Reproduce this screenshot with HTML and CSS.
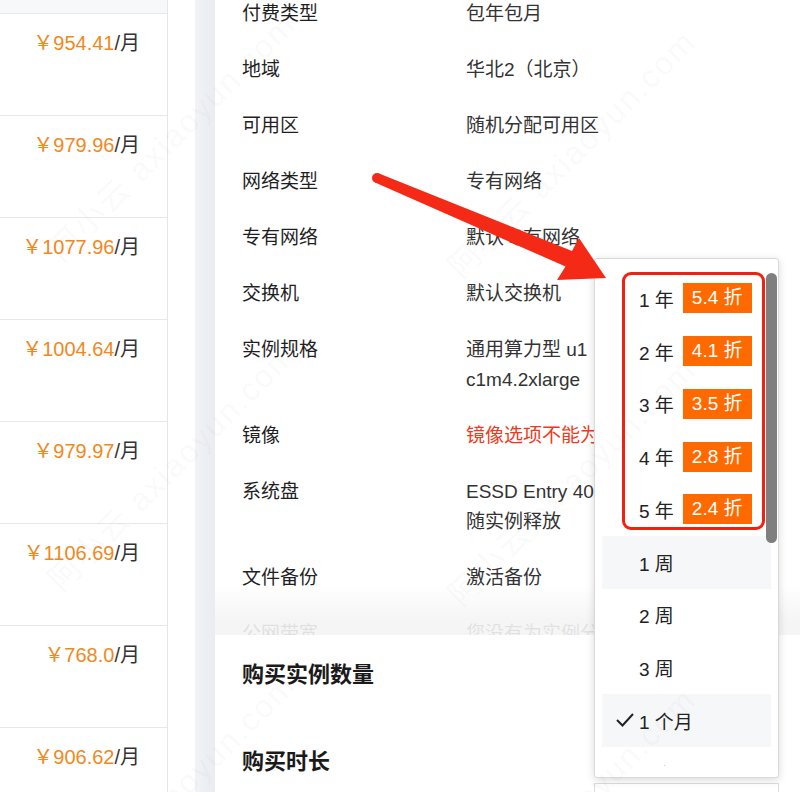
FILE: index.html
```html
<!DOCTYPE html>
<html>
<head>
  <meta charset="utf-8">
  <title>购买实例</title>
  <link rel="stylesheet" href="styles.css">
</head>
<body>
<div class="page">

  <aside class="price-col">
    <div class="price-head"></div>
    <div class="price-row"><span class="amount">￥954.41</span>/月</div>
    <div class="price-row"><span class="amount">￥979.96</span>/月</div>
    <div class="price-row"><span class="amount">￥1077.96</span>/月</div>
    <div class="price-row"><span class="amount">￥1004.64</span>/月</div>
    <div class="price-row"><span class="amount">￥979.97</span>/月</div>
    <div class="price-row"><span class="amount">￥1106.69</span>/月</div>
    <div class="price-row"><span class="amount">￥768.0</span>/月</div>
    <div class="price-row"><span class="amount">￥906.62</span>/月</div>
  </aside>

  <div class="gap"></div>
  <div class="shade"></div>

  <main class="panel">
    <div class="spec-list">
      <div class="spec-inner">
        <div class="spec-row"><div class="spec-label">付费类型</div><div class="spec-value">包年包月</div></div>
        <div class="spec-row"><div class="spec-label">地域</div><div class="spec-value">华北2（北京）</div></div>
        <div class="spec-row"><div class="spec-label">可用区</div><div class="spec-value">随机分配可用区</div></div>
        <div class="spec-row"><div class="spec-label">网络类型</div><div class="spec-value">专有网络</div></div>
        <div class="spec-row"><div class="spec-label">专有网络</div><div class="spec-value">默认专有网络</div></div>
        <div class="spec-row"><div class="spec-label">交换机</div><div class="spec-value">默认交换机</div></div>
        <div class="spec-row"><div class="spec-label">实例规格</div><div class="spec-value">通用算力型 u1（ecs.u1-<br>c1m4.2xlarge</div></div>
        <div class="spec-row"><div class="spec-label">镜像</div><div class="spec-value warn">镜像选项不能为空</div></div>
        <div class="spec-row"><div class="spec-label">系统盘</div><div class="spec-value">ESSD Entry 40 GiB<br>随实例释放</div></div>
        <div class="spec-row"><div class="spec-label">文件备份</div><div class="spec-value">激活备份</div></div>
        <div class="spec-row"><div class="spec-label">公网带宽</div><div class="spec-value">您没有为实例分配公网IP</div></div>
      </div>
    </div>

    <section class="buy">
      <h3 class="buy-title">购买实例数量</h3>
      <h3 class="buy-title second">购买时长</h3>
      <div class="select-box"></div>
    </section>
  </main>

  <div class="dropdown">
    <ul class="options">
      <li class="option"><span class="tick"></span>1 年<span class="off">5.4 折</span></li>
      <li class="option"><span class="tick"></span>2 年<span class="off">4.1 折</span></li>
      <li class="option"><span class="tick"></span>3 年<span class="off">3.5 折</span></li>
      <li class="option"><span class="tick"></span>4 年<span class="off">2.8 折</span></li>
      <li class="option"><span class="tick"></span>5 年<span class="off">2.4 折</span></li>
      <li class="option hover"><span class="tick"></span>1 周</li>
      <li class="option"><span class="tick"></span>2 周</li>
      <li class="option"><span class="tick"></span>3 周</li>
      <li class="option selected"><span class="tick"><svg width="20" height="16" viewBox="0 0 20 16"><polyline points="2,8 7.5,13.5 18,2" fill="none" stroke="#222" stroke-width="2"/></svg></span>1 个月</li>
      <li class="option"><span class="tick"></span>2 个月</li>
    </ul>
    <div class="scroll-thumb"></div>
    <div class="mark-box"></div>
  </div>

  <svg class="arrow" width="800" height="792" viewBox="0 0 800 792">
    <polygon fill="#f42a17" points="379,173.4 572,251 579,238 606,278 557,280 565.5,266.5 375,182.6"/>
    <circle cx="377" cy="178" r="5" fill="#f42a17"/>
  </svg>

  <div class="wm wm1">阿小云 axiaoyun.com</div>
  <div class="wm wm2">阿小云 axiaoyun.com</div>
  <div class="wm wm3">阿小云 axiaoyun.com</div>
  <div class="wm wm4">阿小云 axiaoyun.com</div>
  <div class="wm wm5">阿小云 axiaoyun.com</div>
  <div class="wm wm6">阿小云 axiaoyun.com</div>

</div>
</body>
</html>
```

FILE: styles.css
```css
html, body {
  margin: 0;
  padding: 0;
  background: #fff;
  font-family: "Liberation Sans", "Noto Sans CJK SC", sans-serif;
  color: #222;
}

.page {
  position: relative;
  display: flex;
  width: 800px;
  height: 792px;
  overflow: hidden;
}

/* left price column */
.price-col {
  width: 167px;
  flex: none;
  border-right: 1px solid #e6e6e6;
}
.price-head {
  height: 13px;
  background: #f7f8fa;
  border-bottom: 1px solid #e8e8e8;
}
.price-row {
  height: 84px;
  padding: 17px 27px 0 0;
  border-bottom: 1px solid #e8e8e8;
  text-align: right;
  font-size: 20px;
  line-height: 24px;
  color: #333;
}
.price-row .amount {
  color: #f0891d;
}

.gap {
  width: 27px;
  flex: none;
}
.shade {
  width: 20px;
  flex: none;
  background: linear-gradient(to right, #f1f3f6, #e9ecf0);
}

/* detail panel */
.panel {
  flex: 1;
  display: flex;
  flex-direction: column;
  min-width: 0;
}
.spec-list {
  position: relative;
  height: 635px;
  overflow: hidden;
  flex: none;
}
.spec-list::after {
  content: "";
  position: absolute;
  left: 0;
  right: 0;
  bottom: 0;
  height: 50px;
  background: linear-gradient(rgba(244,244,244,0), rgba(244,244,244,0.9) 70%);
}
.spec-inner {
  margin-top: -14px;
  padding-left: 27px;
}
.spec-row {
  display: flex;
  padding: 13px 0;
  font-size: 19px;
  line-height: 30px;
}
.spec-label {
  width: 224px;
  flex: none;
  color: #1f1f1f;
}
.spec-value {
  color: #333;
  white-space: nowrap;
}
.spec-value.warn {
  color: #ee3a22;
}

.buy {
  padding: 25px 0 0 27px;
}
.buy-title {
  margin: 0;
  font-size: 22px;
  line-height: 30px;
  font-weight: bold;
  color: #1a1a1a;
}
.buy-title.second {
  margin-top: 57px;
}
.select-box {
  margin: 6px 0 0 352px;
  width: 183px;
  height: 40px;
  border: 1px solid #dcdcdc;
}

/* duration dropdown */
.dropdown {
  position: absolute;
  left: 594px;
  top: 258px;
  width: 183px;
  height: 518px;
  background: #fff;
  border: 1px solid #d9d9d9;
  border-radius: 3px;
  box-shadow: 0 2px 8px rgba(0,0,0,0.15);
}
.options {
  list-style: none;
  margin: 13px 0 0;
  padding: 0;
  height: 494px;
  overflow: hidden;
}
.option {
  display: flex;
  align-items: center;
  height: 52.75px;
  margin: 0 7px;
  padding-left: 15px;
  font-size: 19px;
  color: #222;
}
.option.hover,
.option.selected {
  background: #f6f7f8;
}
.tick {
  width: 24px;
  flex: none;
  display: flex;
  align-items: center;
  margin-left: -2px;
}
.off {
  margin-left: 9px;
  padding: 0 9px;
  height: 30px;
  line-height: 30px;
  background: #ff6a00;
  color: #fff;
}
.scroll-thumb {
  position: absolute;
  left: 171px;
  top: 14px;
  width: 11px;
  height: 270px;
  border-radius: 6px;
  background: #7f7f7f;
}
.mark-box {
  position: absolute;
  left: 27px;
  top: 13px;
  width: 137px;
  height: 252px;
  border: 3px solid #f3200f;
  border-radius: 9px;
}

.arrow {
  position: absolute;
  left: 0;
  top: 0;
  pointer-events: none;
}

/* watermark */
.wm {
  position: absolute;
  font-size: 32px;
  letter-spacing: 2px;
  white-space: nowrap;
  color: rgba(110,110,110,0.05);
  transform: translate(-50%, -50%) rotate(-45deg);
  pointer-events: none;
}
.wm1 { left: 170px; top: 135px; }
.wm2 { left: 570px; top: 152px; }
.wm3 { left: 170px; top: 465px; }
.wm4 { left: 570px; top: 480px; }
.wm5 { left: 170px; top: 795px; }
.wm6 { left: 570px; top: 810px; }
```
